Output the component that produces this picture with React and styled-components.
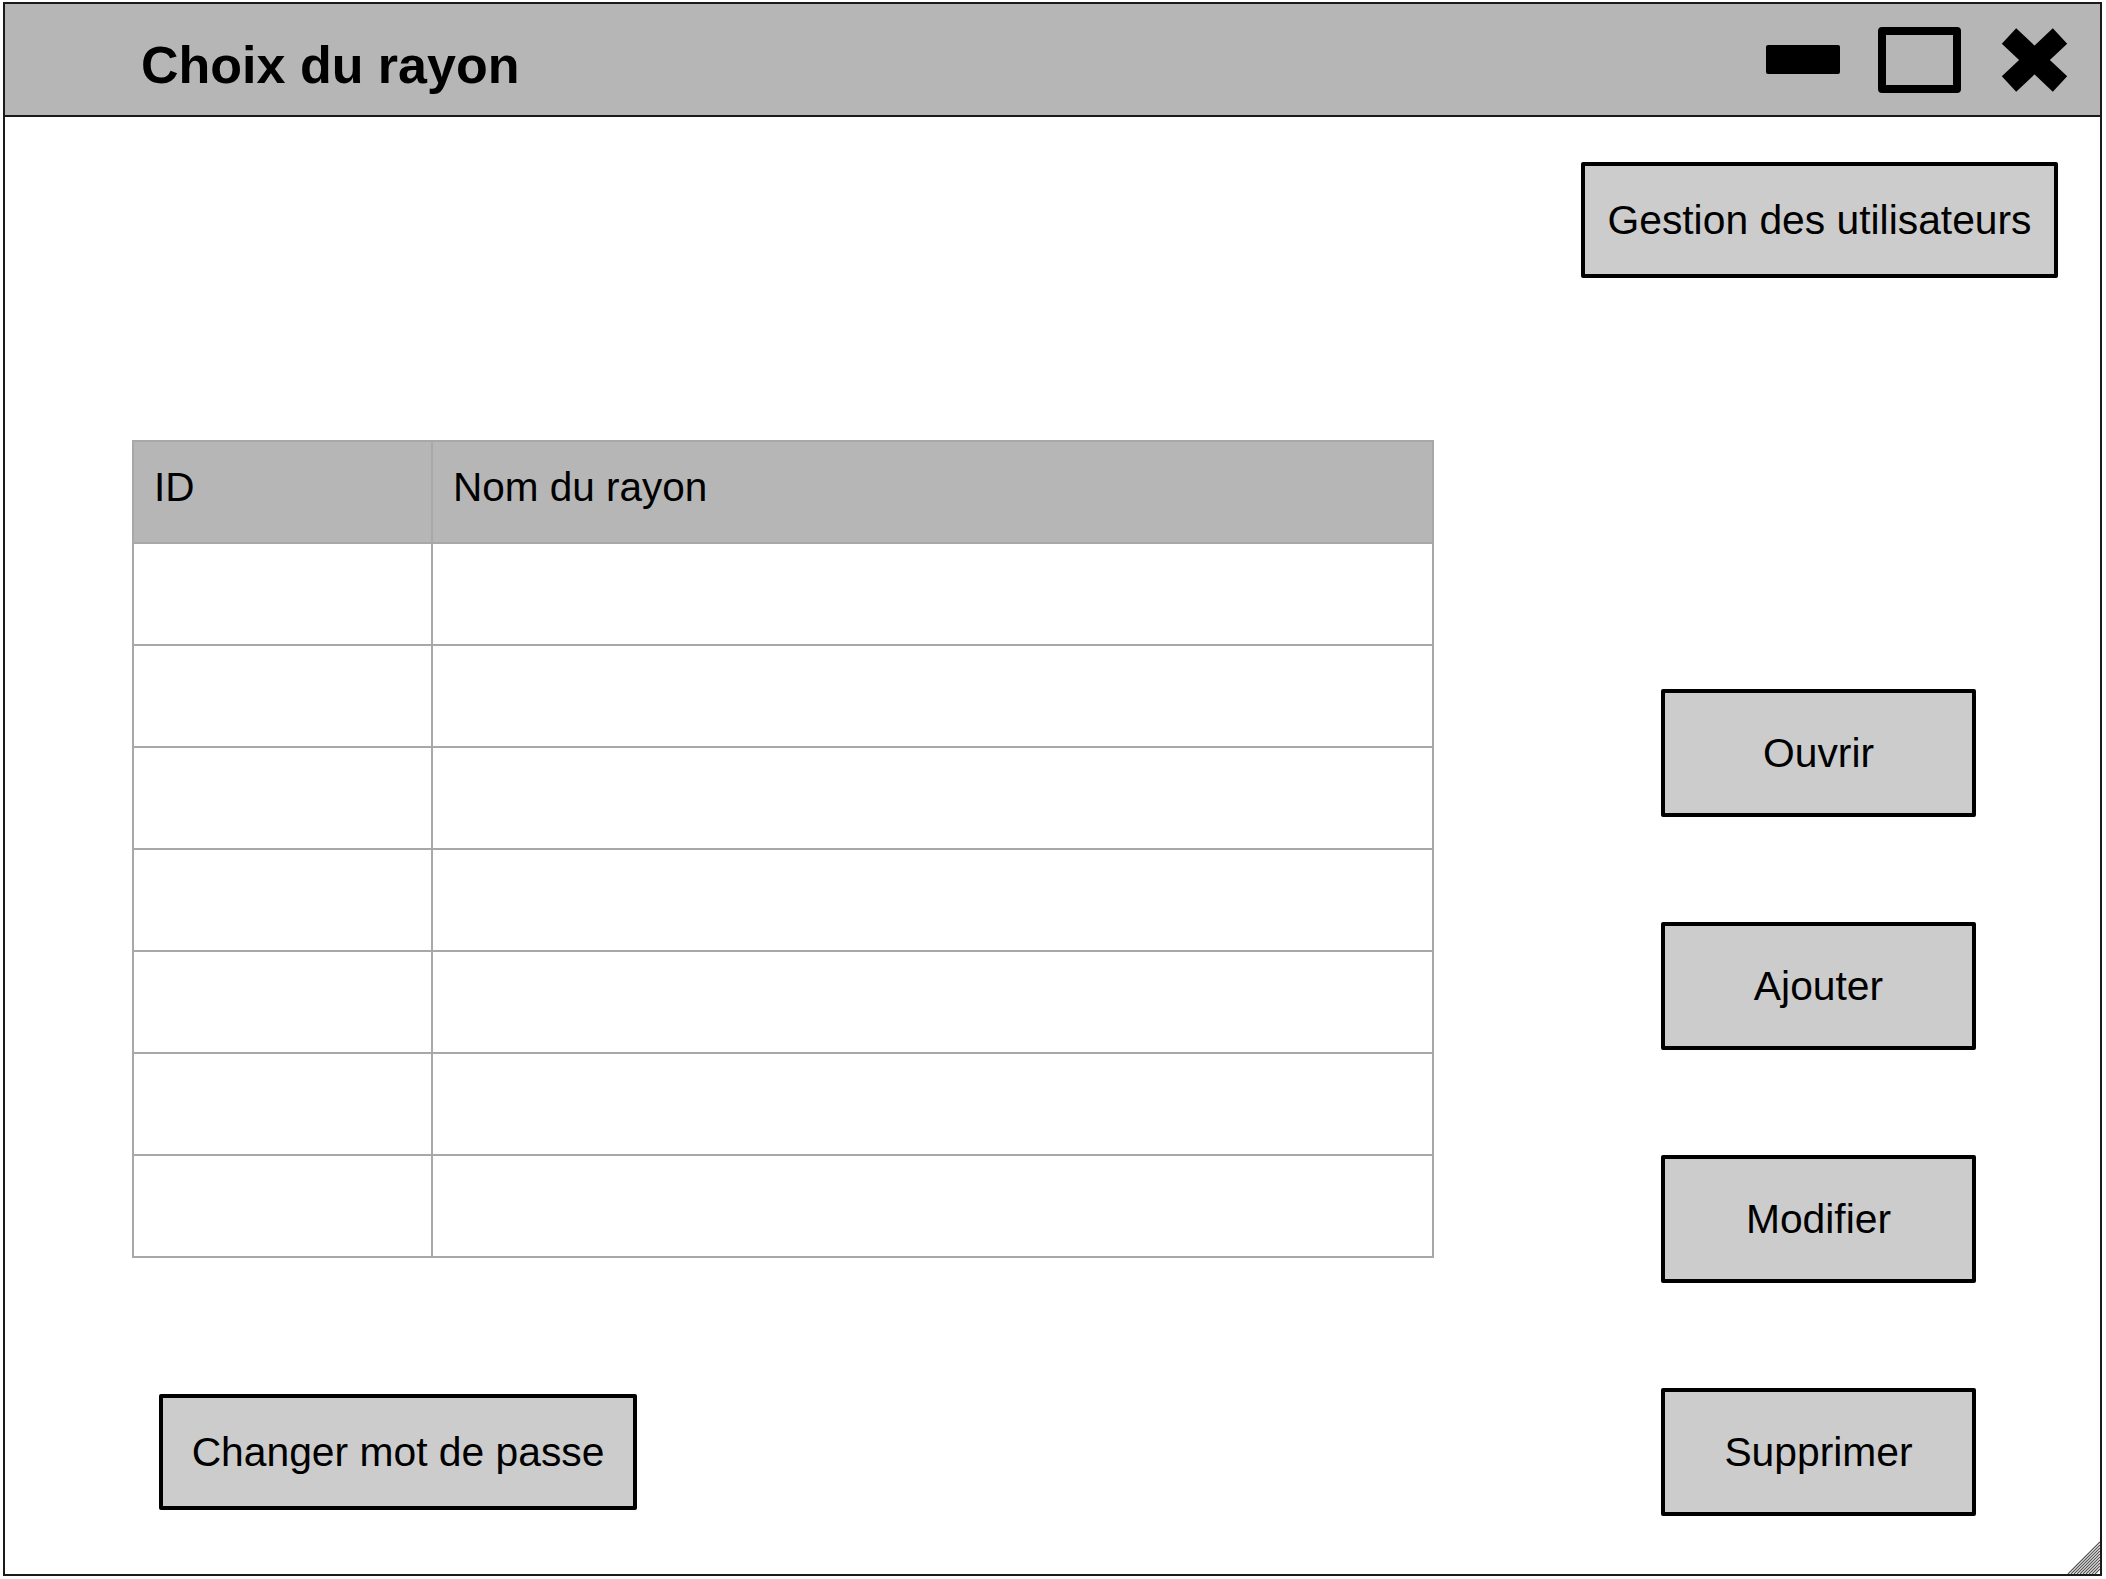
import styled, { createGlobalStyle } from "styled-components";

const GlobalStyle = createGlobalStyle`
  html, body {
    margin: 0;
    padding: 0;
    background: #ffffff;
  }

  body {
    font-family: "Liberation Sans", Arial, sans-serif;
    color: #000000;
  }

  * {
    box-sizing: border-box;
  }
`;

const Window = styled.div`
  margin: 2px 0 0 3px;
  width: 2099px;
  height: 1574px;
  border: 2px solid #1a1a1a;
  background: #ffffff;
  display: flex;
  flex-direction: column;
`;

const TitleBar = styled.div`
  height: 113px;
  flex-shrink: 0;
  background: #b6b6b6;
  border-bottom: 2px solid #1a1a1a;
  display: flex;
  align-items: center;
  justify-content: space-between;
  padding: 0 32px 0 136px;
`;

const Title = styled.h1`
  margin: 0;
  padding-top: 10px;
  font-size: 52px;
  font-weight: 700;
  line-height: 1;
`;

const Controls = styled.div`
  display: flex;
  align-items: center;
  gap: 38px;
`;

const Minimize = styled.div`
  width: 74px;
  height: 29px;
  background: #000000;
  border-radius: 2px;
`;

const Maximize = styled.div`
  width: 83px;
  height: 66px;
  border: 8px solid #000000;
  border-radius: 4px;
  margin-right: 2px;
`;

const CloseIcon = () => (
  <svg width="67" height="64" viewBox="0 0 67 64">
    <path
      d="M8 8 L59 56 M59 8 L8 56"
      stroke="#000"
      strokeWidth="21"
      strokeLinecap="butt"
    />
  </svg>
);

const Body = styled.div`
  flex: 1;
  position: relative;
  display: flex;
  justify-content: space-between;
`;

const LeftPane = styled.div`
  display: flex;
  flex-direction: column;
  padding: 323px 0 0 127px;
`;

const RightPane = styled.div`
  display: flex;
  flex-direction: column;
  align-items: flex-end;
  padding: 45px 42px 0 0;
`;

const Grid = styled.div`
  width: 1302px;
  border: 2px solid #a8a8a8;
`;

const Row = styled.div`
  display: grid;
  grid-template-columns: 297px 1fr;
  height: ${(p) => (p.$first ? 100 : 102)}px;
  border-top: ${(p) => (p.$first ? "none" : "2px solid #a8a8a8")};
  background: ${(p) => (p.$head ? "#b6b6b6" : "#ffffff")};
`;

const Cell = styled.div`
  display: flex;
  align-items: center;
  padding: 0 0 10px 20px;
  font-size: 40.5px;
  border-left: ${(p) => (p.$divider ? "2px solid #a8a8a8" : "none")};
`;

const Button = styled.button`
  width: ${(p) => p.$w}px;
  height: ${(p) => p.$h}px;
  background: #cccccc;
  border: 4px solid #000000;
  border-radius: 2px;
  font-family: "Liberation Sans", Arial, sans-serif;
  font-size: 40.8px;
  color: #000000;
  padding: 0;
  display: flex;
  align-items: center;
  justify-content: center;
  cursor: pointer;
`;

const ChangeButton = styled(Button)`
  margin: 136px 0 0 27px;
`;

const Actions = styled.div`
  display: flex;
  flex-direction: column;
  gap: 105px;
  margin: 411px 82px 0 0;
`;

const Grip = styled.svg`
  position: absolute;
  right: 0;
  bottom: 0;
`;

const ResizeGrip = () => (
  <Grip width="34" height="34" viewBox="0 0 34 34">
    {[2, 5, 8, 11, 14, 17, 20, 23, 26, 29].map((o) => (
      <line
        key={o}
        x1={o}
        y1="34"
        x2="34"
        y2={o}
        stroke="#555555"
        strokeWidth="1.2"
      />
    ))}
  </Grip>
);

const rows = [1, 2, 3, 4, 5, 6, 7];

export default function App() {
  return (
    <>
      <GlobalStyle />
      <Window>
        <TitleBar>
          <Title>Choix du rayon</Title>
          <Controls>
            <Minimize />
            <Maximize />
            <CloseIcon />
          </Controls>
        </TitleBar>
        <Body>
          <LeftPane>
            <Grid>
              <Row $first $head>
                <Cell>ID</Cell>
                <Cell $divider>Nom du rayon</Cell>
              </Row>
              {rows.map((r) => (
                <Row key={r}>
                  <Cell />
                  <Cell $divider />
                </Row>
              ))}
            </Grid>
            <ChangeButton $w={478} $h={116}>
              Changer mot de passe
            </ChangeButton>
          </LeftPane>
          <RightPane>
            <Button $w={477} $h={116}>
              Gestion des utilisateurs
            </Button>
            <Actions>
              <Button $w={315} $h={128}>Ouvrir</Button>
              <Button $w={315} $h={128}>Ajouter</Button>
              <Button $w={315} $h={128}>Modifier</Button>
              <Button $w={315} $h={128}>Supprimer</Button>
            </Actions>
          </RightPane>
          <ResizeGrip />
        </Body>
      </Window>
    </>
  );
}
